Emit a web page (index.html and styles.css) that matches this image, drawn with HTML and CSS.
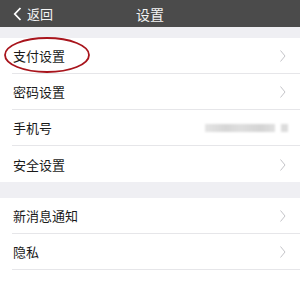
FILE: index.html
```html
<!DOCTYPE html>
<html>

<head>
    <meta name="viewport" content="width=device-width, initial-scale=1">
    <link rel="stylesheet" href="styles.css">
</head>

<body>
    <div class="navbar">
        <div class="back">
            <svg width="9" height="14" viewBox="0 0 9 14"><path d="M7.5 1 L1.8 7 L7.5 13" fill="none" stroke="#fff" stroke-width="1.8"/></svg>
            <span>返回</span>
        </div>
        <div class="title">设置</div>
    </div>

    <div class="group">
        <div class="row">
            <span class="label">支付设置</span>
            <svg class="arrow" width="6" height="12" viewBox="0 0 6 12"><path d="M0.5 0.5 L5 6 L0.5 11.5" fill="none" stroke="#c4c4c8" stroke-width="1"/></svg>
            <!-- red mark drawn over the first row -->
            <svg class="mark" width="88" height="38" viewBox="0 0 88 38"><ellipse cx="44" cy="19" rx="42" ry="17" fill="none" stroke="#a8141c" stroke-width="1.8"/></svg>
        </div>
        <div class="row">
            <span class="label">密码设置</span>
            <svg class="arrow" width="6" height="12" viewBox="0 0 6 12"><path d="M0.5 0.5 L5 6 L0.5 11.5" fill="none" stroke="#c4c4c8" stroke-width="1"/></svg>
        </div>
        <div class="row">
            <span class="label">手机号</span>
            <div class="phone">
                <div class="blur long"></div>
                <div class="blur short"></div>
            </div>
        </div>
        <div class="row">
            <span class="label">安全设置</span>
            <svg class="arrow" width="6" height="12" viewBox="0 0 6 12"><path d="M0.5 0.5 L5 6 L0.5 11.5" fill="none" stroke="#c4c4c8" stroke-width="1"/></svg>
        </div>
    </div>

    <div class="group">
        <div class="row">
            <span class="label">新消息通知</span>
            <svg class="arrow" width="6" height="12" viewBox="0 0 6 12"><path d="M0.5 0.5 L5 6 L0.5 11.5" fill="none" stroke="#c4c4c8" stroke-width="1"/></svg>
        </div>
        <div class="row">
            <span class="label">隐私</span>
            <svg class="arrow" width="6" height="12" viewBox="0 0 6 12"><path d="M0.5 0.5 L5 6 L0.5 11.5" fill="none" stroke="#c4c4c8" stroke-width="1"/></svg>
        </div>
        <div class="row">
            <span class="label">通用</span>
            <svg class="arrow" width="6" height="12" viewBox="0 0 6 12"><path d="M0.5 0.5 L5 6 L0.5 11.5" fill="none" stroke="#c4c4c8" stroke-width="1"/></svg>
        </div>
    </div>
</body>

</html>
```

FILE: styles.css
```css
* {
    box-sizing: border-box;
}

body {
    margin: 0;
    background: #efeff3;
    font-family: "Noto Sans CJK SC", "Noto Sans", sans-serif;
    color: #1a1a1a;
    overflow: hidden;
}

/* top bar */

.navbar {
    position: relative;
    height: 27px;
    background: #4b4b4b;
    color: #f4f4f4;
    display: flex;
    align-items: center;
    justify-content: center;
}

.back {
    position: absolute;
    left: 13px;
    top: 0;
    height: 27px;
    display: flex;
    align-items: center;
    gap: 5px;
    font-size: 13px;
}

.title {
    font-size: 14px;
}

/* list groups */

.group {
    background: #fff;
    margin-top: 11px;
}

.group + .group {
    margin-top: 16px;
}

.row {
    position: relative;
    height: 36px;
    margin-left: 12px;
    padding-right: 14px;
    border-bottom: 1px solid #e6e6e9;
    display: flex;
    align-items: center;
    justify-content: space-between;
}

.row:last-child {
    border-bottom: none;
}

.label {
    font-size: 13px;
    padding-left: 1px;
}

.arrow {
    margin-top: 1px;
}

.mark {
    position: absolute;
    left: -9px;
    top: -2px;
}

/* blurred phone number */

.phone {
    display: flex;
    align-items: center;
    gap: 6px;
    margin-right: -2px;
}

.blur {
    height: 8px;
    background: #dcdcdc;
    filter: blur(1.2px);
}

.long {
    width: 70px;
    background: linear-gradient(90deg, #e4e4e4, #d6d6d6 30%, #dedede 50%, #d4d4d4 80%, #e0e0e0);
}

.short {
    width: 7px;
}
```
